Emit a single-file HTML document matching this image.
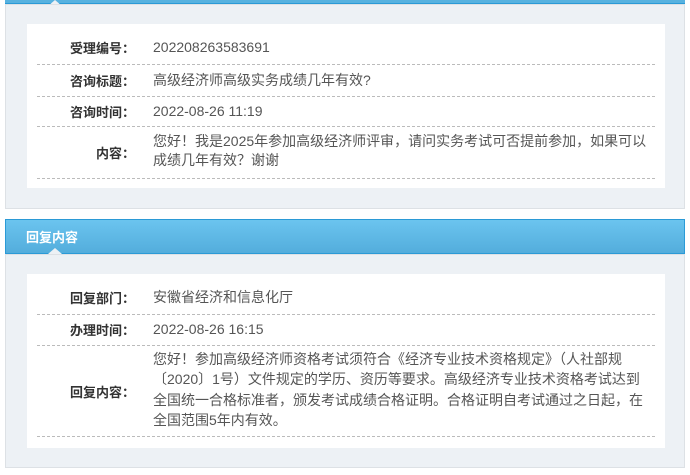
<!DOCTYPE html>
<html><head><meta charset="utf-8"><style>
*{margin:0;padding:0;box-sizing:border-box}
body{width:690px;height:475px;background:#fff;font-family:"Liberation Sans","Noto Sans CJK SC",sans-serif;font-size:13px;color:#555;position:relative;overflow:hidden;line-height:18px}
.topbar{position:absolute;left:5px;top:0;width:680px;height:4px;background:#57b2e0;border-bottom:1px solid #2b9ad6}
.panel{position:absolute;left:5px;width:680px;background:#edf1f5;border:1px solid #dde1e5}
.white{position:absolute;left:21px;width:638px;background:#fff}
.row{position:absolute;left:10px;width:618px;border-bottom:1px dashed #bbb}
.lab{position:absolute;left:0;width:98px;text-align:right;font-weight:bold;color:#333;font-size:13px}
.val{position:absolute;left:116px;width:496px;color:#555;font-size:14px}
.head{position:absolute;left:5px;top:219px;width:680px;height:35px;background:linear-gradient(#6bc4ef,#53addc);border:1px solid #2b9ad6;color:#fff;font-weight:bold;font-size:13px;padding:9px 0 0 20px}
.arr{position:absolute;width:0;height:0;border-left:7px solid transparent;border-right:7px solid transparent;border-bottom:6px solid #edf1f5}
</style></head><body>
<div class="topbar"></div>
<div class="arr" style="left:48px;top:0;border-bottom-color:#edf1f5"></div>
<div class="panel" style="top:4px;height:205px">
 <div class="white" style="top:19px;height:164px">
  <div class="row" style="top:8px;height:33px"><div class="lab" style="top:8px">受理编号：</div><div class="val" style="top:6px">202208263583691</div></div>
  <div class="row" style="top:41px;height:32px"><div class="lab" style="top:8px">咨询标题：</div><div class="val" style="top:6px">高级经济师高级实务成绩几年有效?</div></div>
  <div class="row" style="top:73px;height:30px"><div class="lab" style="top:7px">咨询时间：</div><div class="val" style="top:5px">2022-08-26 11:19</div></div>
  <div class="row" style="top:103px;height:52px"><div class="lab" style="top:18px">内容：</div><div class="val" style="top:5px;line-height:19px">您好！我是2025年参加高级经济师评审，请问实务考试可否提前参加，如果可以成绩几年有效？谢谢</div></div>
 </div>
</div>
<div class="head">回复内容</div>
<div class="arr" style="left:48px;top:248px"></div>
<div class="panel" style="top:254px;height:214px">
 <div class="white" style="top:19px;height:174px">
  <div class="row" style="top:8px;height:33px"><div class="lab" style="top:8px">回复部门：</div><div class="val" style="top:6px">安徽省经济和信息化厅</div></div>
  <div class="row" style="top:41px;height:31px"><div class="lab" style="top:7px">办理时间：</div><div class="val" style="top:5px">2022-08-26 16:15</div></div>
  <div class="row" style="top:72px;height:91px"><div class="lab" style="top:38px">回复内容：</div><div class="val" style="top:3px;line-height:20.4px">您好！参加高级经济师资格考试须符合《经济专业技术资格规定》（人社部规〔2020〕1号）文件规定的学历、资历等要求。高级经济专业技术资格考试达到<br>全国统一合格标准者，颁发考试成绩合格证明。合格证明自考试通过之日起，在<br>全国范围5年内有效。</div></div>
 </div>
</div>
</body></html>
